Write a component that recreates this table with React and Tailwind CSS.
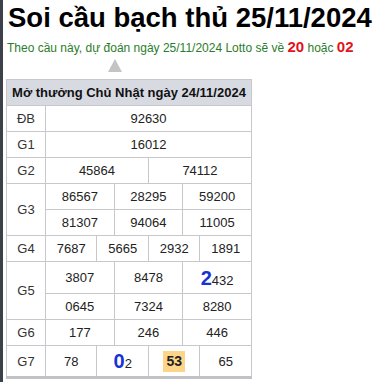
import clsx from 'clsx'

const ROWS = [
  { label: 'ĐB', cells: [['92630']], span: 12 },
  { label: 'G1', cells: [['16012']], span: 12 },
  { label: 'G2', cells: [['45864', '74112']], span: 6 },
  { label: 'G3', cells: [['86567', '28295', '59200'], ['81307', '94064', '11005']], span: 4 },
  { label: 'G4', cells: [['7687', '5665', '2932', '1891']], span: 3 },
  { label: 'G5', cells: [['3807', '8478', 'b2|432'], ['0645', '7324', '8280']], span: 4 },
  { label: 'G6', cells: [['177', '246', '446']], span: 4 },
  { label: 'G7', cells: [['78', 'b0|2', 'hl53', '65']], span: 3 },
]

function Num({ v }) {
  // "b2|432" -> chữ số đầu to, xanh; "hl53" -> nền cam
  if (v.startsWith('b')) {
    const [big, rest] = v.slice(1).split('|')
    return (
      <span>
        <span className="text-[20px] font-bold text-[#1533d6] leading-[22px]">{big}</span>
        {rest}
      </span>
    )
  }
  if (v.startsWith('hl')) {
    return (
      <span className="inline-block bg-[#fdd58a] font-bold text-[14px] px-[3px] leading-[21px] align-middle">
        {v.slice(2)}
      </span>
    )
  }
  return <span>{v}</span>
}

export default function App() {
  return (
    <div
      className="w-[385px] h-[382px] bg-white border-l-[3px] border-[#3b404b] overflow-hidden"
      style={{ fontFamily: '"Liberation Sans", Arial, sans-serif' }}
    >
      <h1 className="pl-[5px] pt-[2px] text-[27.5px] font-bold leading-[32px] text-black whitespace-nowrap">
        Soi cầu bạch thủ 25/11/2024
      </h1>
      <p className="pl-[4px] mt-[4px] text-[12px] leading-[18px] text-[#2a7d2a] whitespace-nowrap">
        Theo cầu này, dự đoán ngày 25/11/2024 Lotto sẽ về{' '}
        <span className="text-[15px] font-bold text-[#e3121b]">20</span> hoặc{' '}
        <span className="text-[15px] font-bold text-[#e3121b]">02</span>
      </p>
      <div className="ml-[105px] mt-[2px] w-0 h-0 border-l-[7px] border-r-[7px] border-b-[13px] border-l-transparent border-r-transparent border-b-[#c4c4c4]" />
      <table className="ml-[3px] mt-[7px] w-[246px] table-fixed border-collapse text-[13px] text-[#222] border-b-[3px] border-b-[#c2c2c6]">
        <colgroup>
          <col className="w-[39px]" />
          {Array.from({ length: 12 }).map((_, i) => (
            <col key={i} />
          ))}
        </colgroup>
        <thead>
          <tr>
            <th
              colSpan={13}
              className="bg-[#d8dae2] border border-[#c8c8cc] text-[13px] font-bold text-[#111] leading-[17px] py-[4px] text-center whitespace-nowrap"
            >
              Mở thưởng Chủ Nhật ngày 24/11/2024
            </th>
          </tr>
        </thead>
        <tbody>
          {ROWS.map((row) =>
            row.cells.map((line, li) => {
              const tall = line.some((v) => v.startsWith('b') || v.startsWith('hl'))
              return (
                <tr key={row.label + li} className={tall ? 'h-[32px]' : 'h-[26px]'}>
                  {li === 0 && (
                    <td
                      rowSpan={row.cells.length}
                      className="border border-[#c8c8cc] text-center text-[#333] leading-[17px]"
                    >
                      {row.label}
                    </td>
                  )}
                  {line.map((v, i) => (
                    <td
                      key={i}
                      colSpan={row.span}
                      className={clsx(
                        'border border-[#c8c8cc] text-center leading-[17px] whitespace-nowrap',
                        tall ? 'py-[3px]' : 'py-[4px]',
                      )}
                    >
                      <Num v={v} />
                    </td>
                  ))}
                </tr>
              )
            }),
          )}
        </tbody>
      </table>
    </div>
  )
}
